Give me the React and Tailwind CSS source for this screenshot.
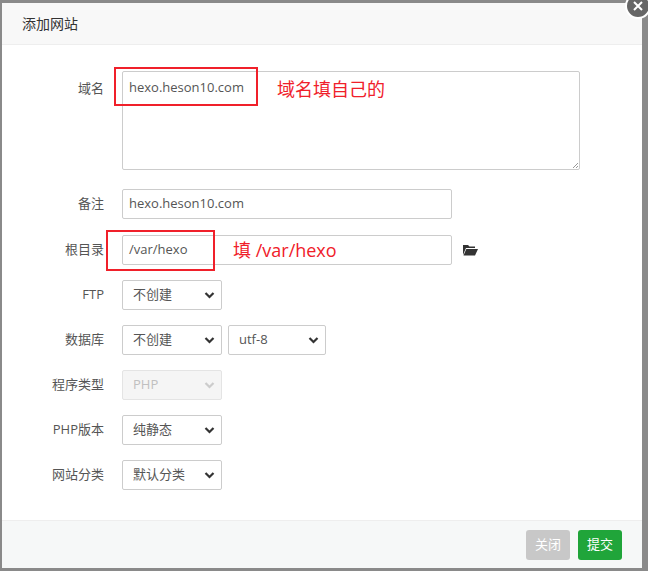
export default function App() {
  const font = { fontFamily: '"Open Sans","Noto Sans CJK SC",sans-serif' };
  const Chevron = ({ c = "#333" }) => (
    <svg width="11" height="8" viewBox="0 0 11 8" className="absolute right-[6px] top-1/2 -translate-y-1/2">
      <path d="M1.5 2 L5.5 6 L9.5 2" fill="none" stroke={c} strokeWidth="2.2" />
    </svg>
  );
  const Sel = ({ w, text, disabled }) => (
    <div className={`relative h-[30px] ${w} border rounded-[2px] flex items-center pl-[10px] text-[13px] ${disabled ? "bg-[#f5f5f5] border-[#e4e4e4] text-[#c0c0c0]" : "bg-white border-[#ccc] text-[#555]"}`}>
      {text}
      <Chevron c={disabled ? "#ccc" : "#333"} />
    </div>
  );
  const Label = ({ children }) => (
    <div className="w-[102px] pr-0 text-right text-[13px] text-[#555] shrink-0">{children}</div>
  );
  return (
    <div className="w-[648px] h-[571px] bg-[#8a8a8a] relative overflow-hidden" style={font}>
      <div className="absolute left-[2px] top-[3px] w-[640px] h-[565px] bg-white flex flex-col">
        <div className="h-[42px] bg-[#f8f8f8] border-b border-[#eee] flex items-center pl-[20px] text-[14px] text-[#333]">添加网站</div>
        <div className="flex-1 relative">
          <div className="flex flex-col pt-[26px]">
            <div className="flex items-start gap-[18px] h-[118px]">
              <div className="pt-[8px]"><Label>域名</Label></div>
              <div className="w-[458px] h-[99px] border border-[#ccc] rounded-[2px] px-[6px] pt-[6px] text-[13px] text-[#555] relative">
                hexo.heson10.com
                <svg width="6" height="6" className="absolute right-[1px] bottom-[1px]" viewBox="0 0 6 6"><path d="M1 6L6 1M4 6L6 4" stroke="#999" strokeWidth="1"/></svg>
              </div>
            </div>
            <div className="flex items-center gap-[18px] h-[30px]">
              <Label>备注</Label>
              <div className="w-[330px] h-[30px] border border-[#ccc] rounded-[2px] px-[6px] flex items-center text-[13px] text-[#555]">hexo.heson10.com</div>
            </div>
            <div className="flex items-center gap-[18px] h-[30px] mt-[16px]">
              <Label>根目录</Label>
              <div className="w-[330px] h-[30px] border border-[#ccc] rounded-[2px] px-[6px] flex items-center text-[13px] text-[#555]">/var/hexo</div>
              <svg width="15" height="12" viewBox="0 0 15 12" className="-ml-[7px]">
                <path d="M0 1h5l1.5 1.5H12V4H3L0 11Z" fill="#333"/>
                <path d="M3.3 5H15L12 11.5H0.5Z" fill="#333"/>
              </svg>
            </div>
            {[
              ["FTP", <Sel w="w-[100px]" text="不创建" />],
              ["数据库", <div className="flex gap-[6px]"><Sel w="w-[100px]" text="不创建" /><Sel w="w-[98px]" text="utf-8" /></div>],
              ["程序类型", <Sel w="w-[100px]" text="PHP" disabled />],
              ["PHP版本", <Sel w="w-[100px]" text="纯静态" />],
              ["网站分类", <Sel w="w-[100px]" text="默认分类" />],
            ].map(([l, c], i) => (
              <div key={i} className="flex items-center gap-[18px] h-[30px] mt-[15px]">
                <Label>{l}</Label>
                {c}
              </div>
            ))}
          </div>
          <div className="absolute left-[112px] top-[22px] w-[144px] h-[39px] border-2 border-[#f0202a]"></div>
          <div className="absolute left-[275px] top-[31px] text-[18px] text-[#f0202a]">域名填自己的</div>
          <div className="absolute left-[104px] top-[185px] w-[109px] h-[41px] border-2 border-[#f0202a]"></div>
          <div className="absolute left-[231px] top-[192px] text-[18px] text-[#f0202a]">填 /var/hexo</div>
        </div>
        <div className="h-[48px] bg-[#f6f8f8] border-t border-[#eee] flex items-center justify-end gap-[8px] pr-[20px]">
          <div className="w-[44px] h-[30px] bg-[#c8c8c8] rounded-[3px] text-white text-[13px] flex items-center justify-center">关闭</div>
          <div className="w-[44px] h-[30px] bg-[#20a53a] rounded-[3px] text-white text-[13px] flex items-center justify-center">提交</div>
        </div>
      </div>
      <div className="absolute left-[625px] top-[-7px] w-[26px] h-[26px] rounded-full bg-[#666] border-2 border-white flex items-center justify-center">
        <svg width="12" height="12" viewBox="0 0 12 12"><path d="M2 2L10 10M10 2L2 10" stroke="white" strokeWidth="2"/></svg>
      </div>
    </div>
  );
}
